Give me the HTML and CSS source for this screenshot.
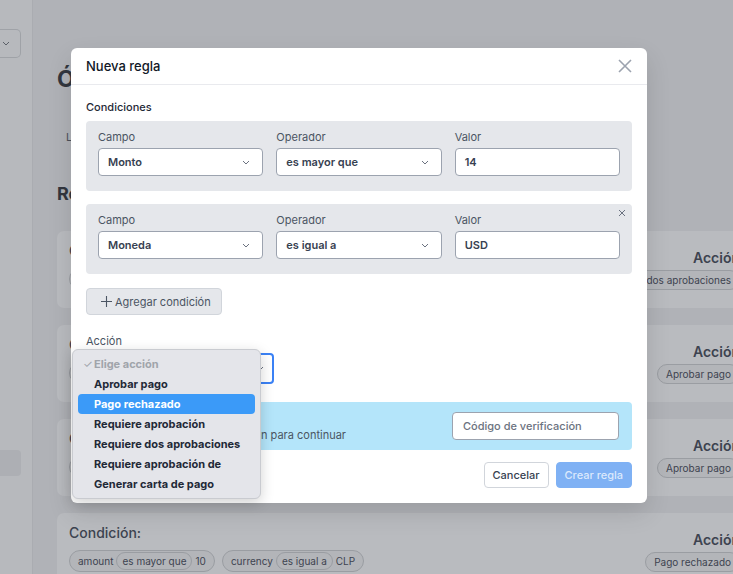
FILE: index.html
```html
<!DOCTYPE html>
<html lang="es">
<head>
  <meta charset="UTF-8" />
  <meta name="viewport" content="width=device-width, initial-scale=1.0"/>
  <title>Reglas de pago</title>
  <link rel="stylesheet" href="styles.css">
</head>
<body>
  <div class="app">
    <aside class="sidebar">
      <div class="side-select">
        <svg width="8" height="5" viewBox="0 0 8 5"><path d="M1 1l3 3 3-3" fill="none" stroke="#5b6068" stroke-width="1"/></svg>
      </div>
      <div class="side-item"></div>
    </aside>

    <main class="main">
      <h1 class="page-title">Órdenes de pago</h1>
      <div class="tabs"><span>Lista de reglas</span></div>
      <h2 class="section-title">Reglas</h2>

      <div class="rules">
        <div class="rule">
          <div class="rule-cond">
            <div class="rule-label">Condición:</div>
            <div class="pills">
              <span class="pill">amount <span class="pill-in">es mayor que</span> 500</span>
            </div>
          </div>
          <div class="rule-action">
            <div class="action-label">Acción</div>
            <span class="pill">Requiere dos aprobaciones</span>
          </div>
        </div>
        <div class="rule">
          <div class="rule-cond">
            <div class="rule-label">Condición:</div>
            <div class="pills">
              <span class="pill">amount <span class="pill-in">es menor que</span> 50</span>
            </div>
          </div>
          <div class="rule-action">
            <div class="action-label">Acción</div>
            <span class="pill">Aprobar pago</span>
          </div>
        </div>
        <div class="rule">
          <div class="rule-cond">
            <div class="rule-label">Condición:</div>
            <div class="pills">
              <span class="pill">currency <span class="pill-in">es igual a</span> USD</span>
            </div>
          </div>
          <div class="rule-action">
            <div class="action-label">Acción</div>
            <span class="pill">Aprobar pago</span>
          </div>
        </div>
        <div class="rule">
          <div class="rule-cond">
            <div class="rule-label">Condición:</div>
            <div class="pills">
              <span class="pill">amount <span class="pill-in">es mayor que</span> 10</span>
              <span class="pill">currency <span class="pill-in">es igual a</span> CLP</span>
            </div>
          </div>
          <div class="rule-action">
            <div class="action-label">Acción</div>
            <span class="pill">Pago rechazado</span>
          </div>
        </div>
      </div>
    </main>
  </div>

  <div class="modal">
    <div class="modal-header">
      <span class="modal-title">Nueva regla</span>
      <svg class="close" width="14" height="14" viewBox="0 0 14 14"><path d="M1 1l12 12M13 1L1 13" stroke="#9ca3af" stroke-width="1.6" fill="none"/></svg>
    </div>

    <div class="modal-body">
      <div class="group-title">Condiciones</div>

      <div class="cond">
        <div class="field">
          <label>Campo</label>
          <div class="select">Monto <svg width="8" height="5" viewBox="0 0 8 5"><path d="M1 1l3 3 3-3" fill="none" stroke="#6b7280"/></svg></div>
        </div>
        <div class="field">
          <label>Operador</label>
          <div class="select">es mayor que <svg width="8" height="5" viewBox="0 0 8 5"><path d="M1 1l3 3 3-3" fill="none" stroke="#6b7280"/></svg></div>
        </div>
        <div class="field">
          <label>Valor</label>
          <div class="input">14</div>
        </div>
      </div>

      <div class="cond">
        <svg class="cond-remove" width="8" height="8" viewBox="0 0 8 8"><path d="M1 1l6 6M7 1L1 7" stroke="#6b7280" stroke-width="1" fill="none"/></svg>
        <div class="field">
          <label>Campo</label>
          <div class="select">Moneda <svg width="8" height="5" viewBox="0 0 8 5"><path d="M1 1l3 3 3-3" fill="none" stroke="#6b7280"/></svg></div>
        </div>
        <div class="field">
          <label>Operador</label>
          <div class="select">es igual a <svg width="8" height="5" viewBox="0 0 8 5"><path d="M1 1l3 3 3-3" fill="none" stroke="#6b7280"/></svg></div>
        </div>
        <div class="field">
          <label>Valor</label>
          <div class="input">USD</div>
        </div>
      </div>

      <button class="add-btn">
        <svg width="11" height="11" viewBox="0 0 11 11"><path d="M5.5 0v11M0 5.5h11" stroke="#4b5563" stroke-width="1.1"/></svg>
        Agregar condición
      </button>

      <div class="action-field">
        <label>Acción</label>
        <div class="select select-focus">Elige acción <svg width="8" height="5" viewBox="0 0 8 5"><path d="M1 1l3 3 3-3" fill="none" stroke="#6b7280"/></svg></div>
      </div>

      <div class="verify">
        <div class="verify-text">
          <div class="verify-title">Verificación requerida</div>
          <div>Ingresa el código de verificación para continuar</div>
        </div>
        <div class="input verify-input">Código de verificación</div>
      </div>

      <div class="modal-footer">
        <button class="btn btn-cancel">Cancelar</button>
        <button class="btn btn-primary">Crear regla</button>
      </div>
    </div>

    <ul class="menu">
      <li class="menu-placeholder"><span class="check">✓</span>Elige acción</li>
      <li>Aprobar pago</li>
      <li class="active">Pago rechazado</li>
      <li>Requiere aprobación</li>
      <li>Requiere dos aprobaciones</li>
      <li>Requiere aprobación de</li>
      <li>Generar carta de pago</li>
    </ul>
  </div>
</body>
</html>
```

FILE: styles.css
```css
* {
  box-sizing: border-box;
}
body {
  margin: 0;
  background-color: #b0b2b7;
  font-family: Inter, "Noto Sans", sans-serif;
  color: #3d424b;
  overflow: hidden;
  height: 574px;
}
.app {
  display: flex;
  width: 752px;
  height: 574px;
}
.sidebar {
  width: 33px;
  flex: none;
  background-color: #b7b9bd;
  border-right: 1px solid #aaacb1;
  padding-top: 29px;
}
.side-select {
  width: 21px;
  height: 29px;
  border: 1px solid #9fa2a7;
  border-left: none;
  border-radius: 0 5px 5px 0;
  display: flex;
  align-items: center;
  padding-left: 2px;
}
.side-item {
  margin-top: 392px;
  width: 21px;
  height: 26px;
  border-radius: 0 4px 4px 0;
  background-color: #adafb4;
}
.main {
  flex: 1;
  padding-left: 24px;
  padding-top: 64px;
}
.page-title {
  margin: 0;
  font-size: 23px;
  line-height: 30px;
  font-weight: 700;
  color: #32363e;
}
.tabs {
  margin-top: 36px;
  padding-left: 9px;
  font-size: 11px;
  line-height: 14px;
  color: #4c515a;
}
.section-title {
  margin: 38px 0 0;
  font-size: 18px;
  line-height: 24px;
  font-weight: 700;
  color: #32363e;
}
.rules {
  margin-top: 25px;
  display: flex;
  flex-direction: column;
  gap: 17px;
}
.rule {
  height: 77px;
  background-color: #b9bbbf;
  border-radius: 7px;
  display: flex;
  justify-content: space-between;
  align-items: flex-end;
  padding: 11px 12px 18px;
}
.rule-cond {
  align-self: stretch;
}
.rule-label {
  font-size: 14px;
  line-height: 18px;
  font-weight: 500;
  color: #3d4350;
}
.pills {
  margin-top: 8px;
  display: flex;
  gap: 7px;
}
.pill {
  display: inline-flex;
  align-items: center;
  gap: 3px;
  border: 1px solid #9a9da2;
  border-radius: 12px;
  padding: 0 8px;
  height: 22px;
  font-size: 10px;
  color: #3d4350;
  background-color: #b3b5b9;
  white-space: nowrap;
}
.pill-in {
  border: 1px solid #9a9da2;
  border-radius: 10px;
  padding: 0 5px;
  height: 18px;
  display: inline-flex;
  align-items: center;
}
.rule-action {
  display: flex;
  flex-direction: column;
  align-items: flex-end;
  gap: 2px;
}
.rule-action .pill {
  height: 20px;
}
.action-label {
  font-size: 14px;
  line-height: 20px;
  font-weight: 600;
  color: #3d4350;
}

/* modal */
.modal {
  position: absolute;
  left: 71px;
  top: 48px;
  width: 576px;
  background-color: #fff;
  border-radius: 6px;
  box-shadow: 0 10px 25px rgba(0, 0, 0, 0.12);
}
.modal-header {
  height: 37px;
  border-bottom: 1px solid #e9eaee;
  display: flex;
  align-items: center;
  justify-content: space-between;
  padding: 0 15px;
}
.modal-title {
  font-size: 13px;
  font-weight: 500;
  color: #111827;
}
.modal-body {
  padding: 14px 15px 15px;
}
.group-title {
  font-size: 11px;
  line-height: 16px;
  font-weight: 500;
  color: #1f2937;
  margin-bottom: 6px;
}
.cond {
  position: relative;
  background-color: #e5e7eb;
  border-radius: 4px;
  display: grid;
  grid-template-columns: repeat(3, 1fr);
  gap: 13px;
  padding: 9px 12px 15px;
  margin-bottom: 13px;
}
.cond-remove {
  position: absolute;
  right: 6px;
  top: 5px;
}
.field label, .action-field label {
  display: block;
  font-size: 11px;
  line-height: 14px;
  color: #4b5563;
  margin-bottom: 4px;
}
.select, .input {
  height: 28px;
  background-color: #fff;
  border: 1px solid #9ca3af;
  border-radius: 4px;
  display: flex;
  align-items: center;
  justify-content: space-between;
  padding: 0 12px 0 9px;
  font-size: 11px;
  font-weight: 600;
  color: #374151;
}
.add-btn {
  margin-top: 14px;
  height: 27px;
  display: flex;
  align-items: center;
  gap: 3px;
  padding: 0 10px 0 14px;
  background-color: #e5e7eb;
  border: 1px solid #d1d5db;
  border-radius: 4px;
  font-family: inherit;
  font-size: 11px;
  color: #4b5563;
}
.action-field {
  margin-top: 19px;
  width: 188px;
}
.action-field label {
  margin-bottom: 5px;
}
.select-focus {
  height: 31px;
  border: 2px solid #3b82f6;
  padding-right: 8px;
}
.verify {
  margin-top: 18px;
  height: 48px;
  background-color: #b4e5fa;
  border-radius: 4px;
  display: flex;
  align-items: center;
  justify-content: space-between;
  padding: 0 13px 0 12px;
}
.verify-text {
  font-size: 11px;
  line-height: 16px;
  color: #4b5563;
  padding-top: 2px;
}
.verify-title {
  font-weight: 600;
  color: #1f2937;
}
.verify-input {
  width: 167px;
  font-weight: 500;
  color: #6b7280;
  padding-left: 10px;
}
.modal-footer {
  margin-top: 12px;
  display: flex;
  justify-content: flex-end;
  gap: 7px;
}
.btn {
  height: 26px;
  border-radius: 4px;
  font-family: inherit;
  font-size: 11px;
  font-weight: 500;
  padding: 0 8px;
}
.btn-cancel {
  background-color: #fff;
  border: 1px solid #d1d5db;
  color: #374151;
}
.btn-primary {
  background-color: #7fb1f4;
  border: 1px solid #7fb1f4;
  color: #dce9fc;
}

/* native select menu */
.menu {
  position: absolute;
  left: 1px;
  top: 301px;
  width: 189px;
  margin: 0;
  padding: 4px 5px;
  list-style: none;
  background-color: #e4e5ea;
  border: 1px solid #c9cbd0;
  border-radius: 6px;
  box-shadow: 0 4px 14px rgba(0, 0, 0, 0.18);
}
.menu li {
  height: 20px;
  line-height: 20px;
  padding-left: 16px;
  border-radius: 4px;
  font-size: 11px;
  font-weight: 700;
  color: #1f2937;
  white-space: nowrap;
}
.menu .menu-placeholder {
  color: #a0a4ab;
  padding-left: 5px;
}
.check {
  display: inline-block;
  width: 11px;
  font-weight: 400;
}
.menu .active {
  background-color: #3b9af8;
  color: #fff;
}
```
